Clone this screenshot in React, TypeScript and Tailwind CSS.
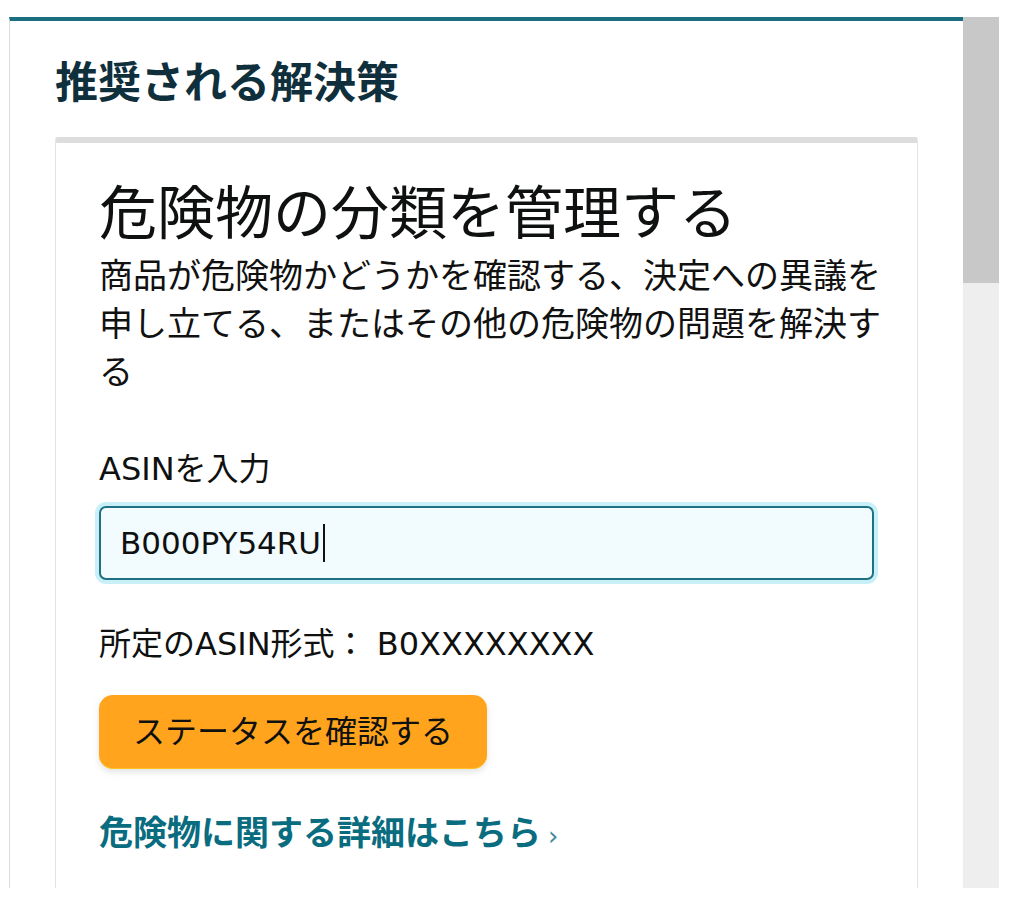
const font = { fontFamily: '"DejaVu Sans", "Noto Sans CJK JP", sans-serif' };

export default function App() {
  return (
    <div className="w-[1024px] h-[915px] bg-white pt-[17px] pl-[9px]" style={font}>
      <div className="flex h-[871px] w-[990px]">
        {/* panel */}
        <div className="flex-1 overflow-hidden border-l border-[#dcdcdc] border-t-4 border-t-[#1b6e80] pt-[33px] pl-[45px] pr-[45px]">
          <h2
            className="text-[43px] leading-[50px] font-bold text-[#0f2f3c]"
            style={{ fontFamily: '"Noto Sans CJK JP", sans-serif' }}
          >
            推奨される解決策
          </h2>

          <div className="mt-[33px] h-[800px] border-t-[6px] border-t-[#dddddd] border-x border-x-[#e3e3e3] rounded-t-[3px] pt-[37px] pl-[43px] pr-[28px] text-[#0f1111]">
            <h3 className="text-[58px] leading-[68px] font-normal">危険物の分類を管理する</h3>
            <p className="mt-[4px] text-[34px] leading-[48px] text-[#111]">
              商品が危険物かどうかを確認する、決定への異議を申し立てる、またはその他の危険物の問題を解決する
            </p>

            <label className="block mt-[53px] text-[32px] leading-[40px]">ASINを入力</label>
            <div className="mt-[17px] mr-[15px] flex items-center h-[74px] rounded-[7px] border-2 border-[#1f7282] bg-[#f2fbfd] shadow-[0_0_0_4px_#c9f0f8] pl-[19px]">
              <span className="text-[31px] leading-[40px] text-[#0f1111]">B000PY54RU</span>
              <span className="ml-[2px] w-[2px] h-[38px] bg-[#111]" />
            </div>

            <p className="mt-[44px] text-[32px] leading-[40px]">所定のASIN形式： B0XXXXXXXX</p>

            <button className="mt-[31px] flex items-center justify-center w-[388px] h-[74px] rounded-[14px] bg-[#ffa41c] border-b border-[#ffc21e] shadow-[0_3px_6px_rgba(200,200,200,0.5)] text-[32px] text-[#0f1111]">
              ステータスを確認する
            </button>

            <a className="mt-[40px] flex items-baseline text-[34px] leading-[44px] font-bold text-[#0a6c7f]">
              <span style={{ fontFamily: '"Noto Sans CJK JP", sans-serif' }}>危険物に関する詳細はこちら</span>
              <span className="ml-[7px] text-[26px] font-normal text-[#3d8a98]">›</span>
            </a>
          </div>
        </div>

        {/* scrollbar */}
        <div className="w-[36px] flex flex-col bg-[#eeeeee]">
          <div className="h-[266px] bg-[#c8c8c8]" />
        </div>
      </div>
    </div>
  );
}
